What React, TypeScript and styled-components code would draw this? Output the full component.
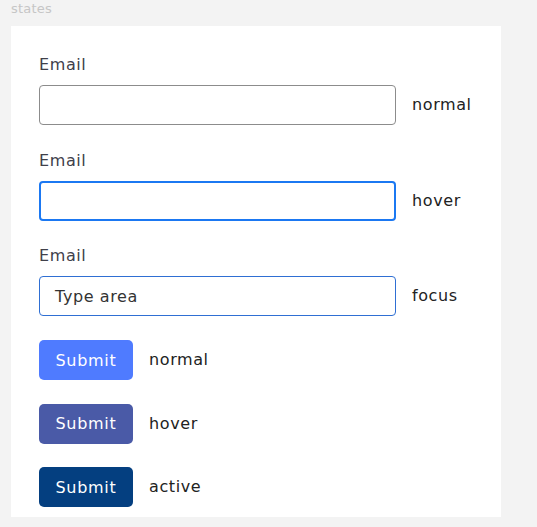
import React from "react";
import styled, { createGlobalStyle } from "styled-components";

const GlobalStyle = createGlobalStyle`
  html, body {
    margin: 0;
    padding: 0;
    background: #f3f3f3;
    font-family: "DejaVu Sans", "Liberation Sans", sans-serif;
  }
`;

const Page = styled.div`
  width: 537px;
  height: 527px;
  background: #f3f3f3;
  display: flex;
  flex-direction: column;
`;

const SectionTitle = styled.div`
  height: 26px;
  padding-left: 11px;
  padding-top: 1px;
  box-sizing: border-box;
  font-size: 13px;
  line-height: 16px;
  color: #c6c6c6;
  letter-spacing: 0.2px;
`;

const Card = styled.div`
  margin-left: 11px;
  width: 490px;
  box-sizing: border-box;
  background: #ffffff;
  padding: 29px 28px 10px 28px;
  display: flex;
  flex-direction: column;
`;

const FieldGroup = styled.div`
  display: flex;
  flex-direction: column;
  margin-bottom: 25.5px;
`;

const Label = styled.div`
  font-size: 16px;
  line-height: 20px;
  letter-spacing: 0.6px;
  color: #40404a;
  margin-bottom: 10px;
`;

const Row = styled.div`
  display: flex;
  align-items: center;
  gap: 16px;
`;

const InputBox = styled.div<{ $state: "normal" | "hover" | "focus" }>`
  width: 357px;
  height: 40px;
  box-sizing: border-box;
  border-radius: 4px;
  background: #fff;
  display: flex;
  align-items: center;
  padding-left: ${(p) => (p.$state === "hover" ? 15 : 15)}px;
  border: ${(p) =>
    p.$state === "hover"
      ? "2px solid #1b78f2"
      : p.$state === "focus"
      ? "1px solid #2f6fd3"
      : "1px solid #8c8c8c"};
  font-size: 16px;
  letter-spacing: 0.6px;
  color: #333;
`;

const StateText = styled.span`
  font-size: 16px;
  line-height: 20px;
  letter-spacing: 0.6px;
  color: #222;
`;

const ButtonList = styled.div`
  display: flex;
  flex-direction: column;
  gap: 23.5px;
  margin-top: -1.5px;
`;

const SubmitButton = styled.div<{ $bg: string }>`
  width: 94px;
  height: 40px;
  border-radius: 5px;
  background: ${(p) => p.$bg};
  color: #fff;
  font-size: 16px;
  letter-spacing: 0.7px;
  display: flex;
  align-items: center;
  justify-content: center;
`;

const inputs: { state: "normal" | "hover" | "focus"; text?: string }[] = [
  { state: "normal" },
  { state: "hover" },
  { state: "focus", text: "Type area" },
];

const buttons = [
  { bg: "#4f7bff", label: "normal" },
  { bg: "#4a5aa7", label: "hover" },
  { bg: "#043f80", label: "active" },
];

export default function App() {
  return (
    <>
      <GlobalStyle />
      <Page>
        <SectionTitle>states</SectionTitle>
        <Card>
          {inputs.map((i) => (
            <FieldGroup key={i.state}>
              <Label>Email</Label>
              <Row>
                <InputBox $state={i.state}>{i.text}</InputBox>
                <StateText>{i.state}</StateText>
              </Row>
            </FieldGroup>
          ))}
          <ButtonList>
            {buttons.map((b) => (
              <Row key={b.label}>
                <SubmitButton $bg={b.bg}>Submit</SubmitButton>
                <StateText>{b.label}</StateText>
              </Row>
            ))}
          </ButtonList>
        </Card>
      </Page>
    </>
  );
}
